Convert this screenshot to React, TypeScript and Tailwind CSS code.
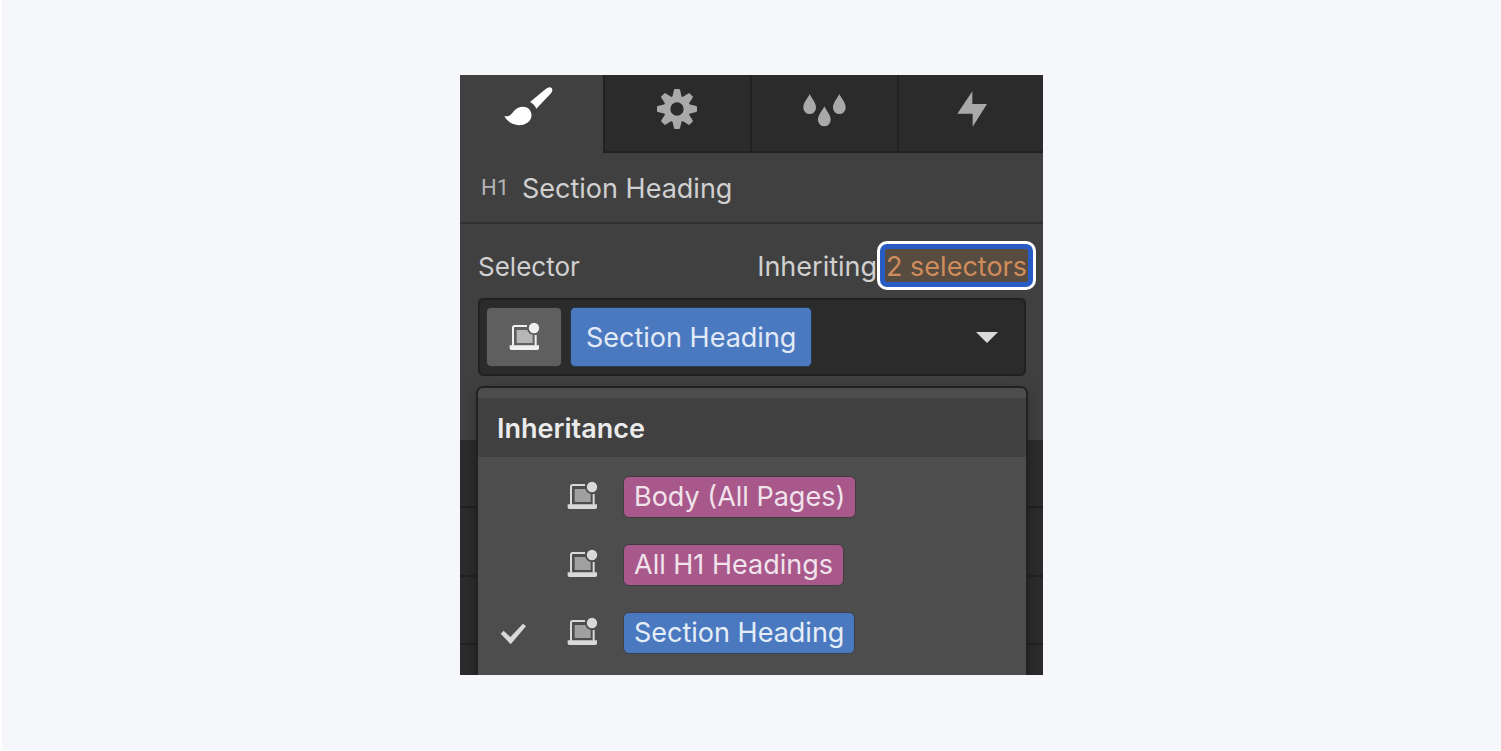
import type React from "react"

interface Selector {
  name: string
  kind: "tag" | "class"
  active: boolean
}

const selectors: Selector[] = [
  { name: "Body (All Pages)", kind: "tag", active: false },
  { name: "All H1 Headings", kind: "tag", active: false },
  { name: "Section Heading", kind: "class", active: true },
]

const BrushIcon = () => (
  <svg viewBox="156 62 156 138" className="w-[52px] h-[46px]" fill="currentColor" aria-hidden="true">
    <path d="M240 110 L288 70 Q298 62 305 68 Q310 75 303 84 L259 130 Q253 116 240 110Z" />
    <path d="M163 152 C177 156 183 147 190 139 C203 122 226 121 237 131 C249 144 246 163 232 172 C210 187 177 179 163 152Z" />
  </svg>
)

const GearIcon = () => (
  <svg viewBox="603 64 156 138" className="w-[52px] h-[46px]" fill="currentColor" aria-hidden="true">
    <circle cx="678" cy="133" r="30" fill="none" stroke="currentColor" strokeWidth="20" />
    {[0, 45, 90, 135, 180, 225, 270, 315].map((angle) => (
      <path key={angle} d="M664 97 L669 75 Q670 73 672 73 H684 Q686 73 687 75 L692 97Z" transform={`rotate(${angle} 678 133)`} />
    ))}
  </svg>
)

const DropsIcon = () => (
  <svg viewBox="146 64 156 138" className="w-[52px] h-[46px]" fill="currentColor" aria-hidden="true">
    <path d="M178 88 C184 101 197 114 197 129 A19 19 0 0 1 159 129 C159 114 172 101 178 88Z" />
    <path d="M222 125 C228 138 241 151 241 166 A19 19 0 0 1 203 166 C203 151 216 138 222 125Z" />
    <path d="M267 88 C273 101 286 114 286 129 A19 19 0 0 1 248 129 C248 114 261 101 267 88Z" />
  </svg>
)

const BoltIcon = () => (
  <svg viewBox="585 64 156 138" className="w-[52px] h-[46px]" fill="currentColor" aria-hidden="true">
    <path d="M667 80 V118 H711 L668 186 V147 H622Z" />
  </svg>
)

const DeviceIcon = () => (
  <svg viewBox="353 62 93 87" className="w-[31px] h-[29px] shrink-0" fill="currentColor" aria-hidden="true">
    <path d="M365 133 V79 Q365 74 370 74 H407 M433 101 V133" fill="none" stroke="currentColor" strokeWidth="6" />
    <path d="M376 86 H408 Q411 98 424 101 V125 H376Z" opacity="0.6" />
    <path d="M355 132 H443 V141 Q443 146 438 146 H360 Q355 146 355 141Z" />
    <circle cx="428" cy="80" r="15.5" />
  </svg>
)

const CheckIcon = () => (
  <svg viewBox="150 492 81 66" className="w-[27px] h-[22px]" fill="currentColor" aria-hidden="true">
    <path d="M152 524 L161 515 L181 534 L219 494 L228 502 L182 556Z" />
  </svg>
)

const tabs = [
  { label: "Style", icon: <BrushIcon /> },
  { label: "Settings", icon: <GearIcon /> },
  { label: "Style manager", icon: <DropsIcon /> },
  { label: "Interactions", icon: <BoltIcon /> },
]

const App: React.FC = () => {
  return (
    <main className="min-h-screen flex justify-center items-start border-l-2 border-b border-white bg-[#f5f7fa] py-[75px] font-['Inter',sans-serif] text-[27px] leading-8 text-[#d0d0d0]">
      <div className="w-full max-w-[583px] overflow-hidden bg-[#404040]">
        <div role="tablist" className="grid grid-cols-[143fr_147fr_147fr_146fr]">
          {tabs.map((tab, index) => (
            <button
              key={tab.label}
              type="button"
              role="tab"
              aria-label={tab.label}
              aria-selected={index === 0}
              className={
                index === 0
                  ? "h-[78px] flex justify-center items-center pr-2 pb-2.5 text-white"
                  : "h-[78px] flex justify-center items-center pb-2 border-l-2 border-b-2 border-[#212121] bg-[#2b2b2b] text-[#a9a9a9]"
              }
            >
              {tab.icon}
            </button>
          ))}
        </div>

        <header className="h-[71px] flex items-center border-b-2 border-[#303030] pl-[21px]">
          <span className="w-[41px] font-['Roboto',sans-serif] text-[22px] text-[#b5b5b5]">H1</span>
          <h1 className="pt-0.5">Section Heading</h1>
        </header>

        <section className="h-[216px] pl-[18px] pr-[17px] pt-[17px]">
          <div className="flex items-center justify-between -mr-2.5">
            <span id="selector-label" className="pt-0.5 text-[26px]">Selector</span>
            <div className="flex items-center">
              <span className="pt-0.5">Inheriting</span>
              <button
                type="button"
                className="h-[49px] flex items-center rounded-[10px] border-[3px] border-white bg-white text-[#d08c5b]"
              >
                <span className="h-[43px] flex items-center rounded-[7px] border-[5px] border-[#265cc4] bg-[#584b40] px-px pt-0.5">
                  2 selectors
                </span>
              </button>
            </div>
          </div>

          <div className="relative mt-2">
            <div
              role="group"
              aria-labelledby="selector-label"
              className="flex items-center gap-2 rounded-[5px] border-2 border-[#212121] bg-[#2b2b2b] p-[7px] pl-1.5"
            >
              <button
                type="button"
                aria-label="Breakpoint"
                className="w-[76px] h-[60px] flex justify-center items-center rounded-[5px] border border-[#2f2f2f] bg-[#5f5f5f] pb-0.5 text-[#f0f0f0]"
              >
                <DeviceIcon />
              </button>
              <button
                type="button"
                className="h-[60px] rounded-[5px] border border-[#2a3649] bg-[#4b79c0] px-[15px] pt-0.5 whitespace-nowrap text-[#e1eaf6]"
              >
                Section Heading
              </button>
              <button type="button" aria-label="Show inheritance" aria-expanded="true" className="ml-auto mr-[19px] text-[#d9d9d9]">
                <svg viewBox="0 0 22 11" className="w-[22px] h-[11px]" fill="currentColor" aria-hidden="true">
                  <path d="M0 0 H22 L11 11Z" />
                </svg>
              </button>
            </div>

            <div className="absolute top-full -inset-x-0.5 mt-2.5 rounded-t-[7px] border-2 border-[#212121] bg-[#4d4d4d] pt-2.5 pb-10 shadow-[0_4px_14px_rgba(0,0,0,0.25)]">
              <h2 className="h-[59px] flex items-center bg-[#404040] pl-[19px] pt-0.5 font-semibold text-[#ebebeb]">Inheritance</h2>
              <ul className="pt-1.5">
                {selectors.map((selector) => (
                  <li key={selector.name} className="h-[68px] flex items-center pl-[22px] text-[#d9d9d9]">
                    <span className="w-[27px] mr-10 pt-0.5">{selector.active && <CheckIcon />}</span>
                    <span className="pb-[3px]">
                      <DeviceIcon />
                    </span>
                    <button
                      type="button"
                      className={
                        selector.kind === "tag"
                          ? "ml-[25px] h-[42px] rounded-[6px] border border-[#413c40] bg-[#a8588a] px-2.5 whitespace-nowrap text-[#f1e3ec]"
                          : "ml-[25px] h-[42px] rounded-[6px] border border-[#3c4149] bg-[#4b79c0] px-2.5 whitespace-nowrap text-[#e5edf7]"
                      }
                    >
                      {selector.name}
                    </button>
                  </li>
                ))}
              </ul>
            </div>
          </div>
        </section>

        <div className="bg-[#2b2b2b]">
          <div className="h-[68px] border-b-2 border-[#212121]"></div>
          <div className="h-[69px] border-b-2 border-[#212121]"></div>
          <div className="h-[68px] border-b-2 border-[#212121]"></div>
          <div className="h-[30px]"></div>
        </div>
      </div>
    </main>
  )
}

export default App
